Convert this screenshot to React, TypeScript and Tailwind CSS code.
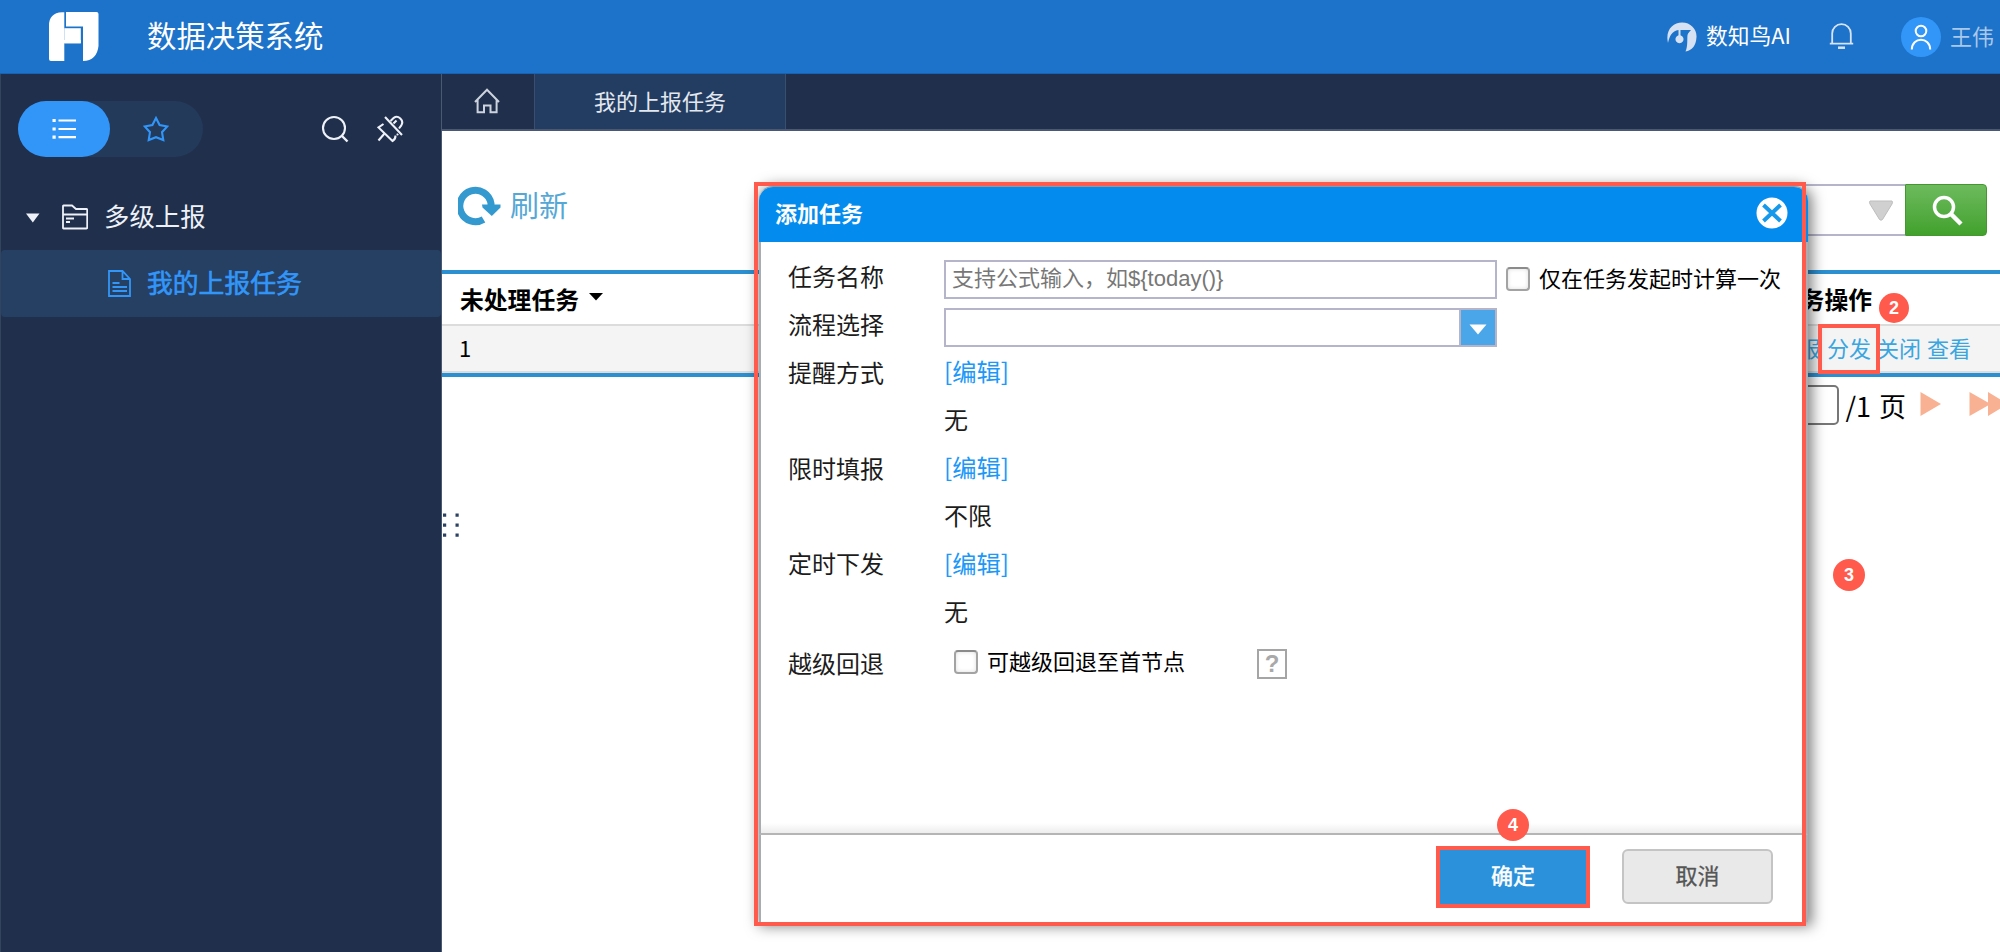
import type { ReactNode } from "react";

const icon = { fill: "none", stroke: "currentColor" } as const;

function Badge({ n, className }: { n: string; className: string }) {
  return (
    <span className={`absolute flex items-center justify-center rounded-full bg-[#ff5a4c] font-['Liberation_Sans'] text-[18px] font-bold leading-none text-white ${className}`}>
      {n}
    </span>
  );
}

function Header() {
  return (
    <header className="flex h-[74px] shrink-0 items-center border-b border-[#1862b4] bg-[#1d72c9] text-white">
      <svg className="ml-12 h-[51px] w-[51px]" viewBox="0 0 51 51" fill="white">
        <path d="M16.3 1.3 V29 H32.8 V32.3 H16.3 V50 H3 Q1 50 1 48 V14.5 Q1 2 14 1.3Z" />
        <path d="M16.3 17.2 H32.8 V32.3 H16.3Z" />
        <path d="M18 1 H48.5 Q50.5 1 50.5 3 V35 Q49 49.5 35 50 V15.6 H18Z" />
      </svg>
      <h1 className="ml-[48px] pb-[3px] text-[29.4px] leading-none">数据决策系统</h1>
      <div className="ml-auto flex items-center">
        <svg className="h-[30px] w-[30px] text-[#d6e2f4]" viewBox="0 0 30 30" fill="currentColor">
          <path d="M1 21 C-2 8 6 0.5 15 0.5 C24 0.5 30 7.5 29.5 15 C29 24 25 28.5 18.5 29.5 C21 24 20 17 20.5 13 C21 10.5 23 9.5 24 8 H13.5 V13.3 A4 4 0 1 1 11.5 13.3 V8 C5 9 2.500 14 1 21Z" />
        </svg>
        <span className="ml-[9px] pb-[3px] text-[21.8px] leading-none">数知鸟AI</span>
        <svg {...icon} className="ml-[38px] h-[27px] w-[25px] text-[#d6e4f6]" viewBox="0 0 25 27" strokeWidth="1.8">
          <path d="M3.2 20 V10.500 A9.300 9.300 0 0 1 21.800 10.500 V20 M0.800 20.600 H24.200" />
          <path d="M9 24.700 H16" strokeWidth="2.500" />
        </svg>
        <span className="ml-[47px] flex h-10 w-10 items-center justify-center rounded-full bg-[#3296f9]">
          <svg {...icon} className="h-[26px] w-[22px]" viewBox="0 0 22 26" strokeWidth="2">
            <circle cx="11" cy="7" r="5.300" />
            <path d="M1.800 25.500 C1.800 12.500 20.200 12.500 20.200 25.500" />
          </svg>
        </span>
        <span className="ml-[9px] mr-[6px] pb-1 text-[22px] leading-none text-[#a9c8ea]">王伟</span>
      </div>
    </header>
  );
}

function Sidebar() {
  return (
    <aside className="flex w-[442px] shrink-0 flex-col border-l border-r border-l-[#33445f] border-r-[#4a5873] bg-[#202f4b]">
      <div className="mt-[27px] flex h-14 items-center pl-[17px]">
        <div className="flex h-14 w-[185px] rounded-full bg-[#233a5b]">
          <span className="flex w-[92px] items-center justify-center rounded-full bg-[#3296f9] text-white">
            <svg {...icon} className="h-[22px] w-6" viewBox="0 0 24 22" strokeWidth="2.200">
              <path d="M6.500 2.500 H24 M6.500 11 H24 M6.500 19.200 H24" />
              <path d="M0.500 2.500 H3.700 M0.500 11 H3.700 M0.500 19.200 H3.700" strokeWidth="3.200" />
            </svg>
          </span>
          <span className="flex w-[92px] items-center justify-center text-[#3296f9]">
            <svg {...icon} className="h-[26px] w-[26px]" viewBox="0 0 26 26" strokeWidth="2.100">
              <path d="M13 2 L16.600 9 L24.300 10.400 L19 16.200 L20.300 24 L13 21.200 L5.700 24 L7 16.200 L1.700 10.400 L9.400 9Z" />
            </svg>
          </span>
        </div>
        <svg {...icon} className="ml-[118px] h-[28px] w-[28px] text-[#eef2f8]" viewBox="0 0 28 28" strokeWidth="2.100">
          <circle cx="13" cy="13" r="11" />
          <path d="M20.500 20.500 L26.500 26.500" strokeWidth="2.400" />
        </svg>
        <svg {...icon} className="ml-[27px] h-[28px] w-[28px] text-[#eef2f8]" viewBox="0 0 28 28" strokeWidth="2.100">
          <path d="M9 2 L26 20" />
          <path d="M7.500 9 L2.500 12.500 L16.500 26 Q19.500 24.500 19.500 20.500 M22 18.800 L21 20" />
          <path d="M8.500 18.500 L2.500 25.500" />
          <path d="M14.500 6 L17.800 2.800 C22 -0.300 28.500 5.200 25.300 10.300 L23 13.500 M17.500 8.500 L20.500 5.500" />
        </svg>
      </div>
      <div className="mt-[26px] flex h-[67px] items-center pl-[25px] text-[#eef2f8]">
        <svg className="mt-[2px] h-[10px] w-[14px]" viewBox="0 0 14 10" fill="currentColor"><path d="M0 0.500 H13.500 L6.800 9.500Z" /></svg>
        <svg {...icon} className="ml-[22px] mt-px h-[26px] w-[26px]" viewBox="0 0 26 26" strokeWidth="1.800">
          <path d="M1 24 V2 Q1 1.500 1.500 1.500 H10 L14 5 H24.500 Q25.200 5 25.200 6 V24 Q25.200 24.500 24.500 24.500 H1.500 Q1 24.500 1 24Z M1 10.500 H25 M4 14.500 H12 M4 18 H8" />
        </svg>
        <span className="ml-4 pb-px text-[25.4px] leading-none">多级上报</span>
      </div>
      <div className="flex h-[67px] items-center rounded bg-[#254063] pl-[107px] text-[#3296f9]">
        <svg {...icon} className="h-[27px] w-[23px]" viewBox="0 0 23 27" strokeWidth="1.800">
          <path d="M1 1 H14.500 L22 9 V26 H1Z M14.500 1 V9 H22 M4.500 13 H11.500 M4.500 17 H19 M4.500 21 H19" />
        </svg>
        <span className="ml-[16px] pb-[3px] text-[25.800px] leading-none [-webkit-text-stroke:0.6px_#3296f9]">我的上报任务</span>
      </div>
    </aside>
  );
}

function Tabs() {
  return (
    <nav className="flex h-[57px] shrink-0 border-b-2 border-[#4a5873] bg-[#202f4b] text-[#e3e8ef]">
      <span className="flex w-[93px] items-center justify-center border-r border-[#3a4f70] pb-[2px] pr-[2px]">
        <svg {...icon} className="h-[26px] w-[26px] text-[#ccd3de]" viewBox="0 0 26 26" strokeWidth="2">
          <path d="M1 14 L13 1.800 L25 14 M3.600 12 V24.300 H10 V17.500 H16.500 V24.300 H22.600 V12" />
        </svg>
      </span>
      <span className="flex w-[251px] items-center justify-center border-r border-[#3a4f70] bg-[#233d62] pb-[4px] text-[22px] leading-none">我的上报任务</span>
    </nav>
  );
}

function Report() {
  return (
    <section className="relative flex grow flex-col text-black">
      <div className="flex h-[139px] items-start pl-4">
        <svg {...icon} className="mt-[53px] h-[42px] w-[43px] text-[#3399cf]" viewBox="0 0 43 42" strokeWidth="7">
          <path d="M25.500 35.500 A15.700 15.700 0 1 1 33 19.500 V23" />
          <path d="M24 20.500 H42.500 V23.500 L33.800 32 L24.500 23.500Z" fill="currentColor" stroke="none" />
        </svg>
        <span className="ml-[9px] mt-[59px] text-[29px] leading-none text-[#55a8d6]">刷新</span>
        <div className="ml-auto mr-[13px] mt-[53px] flex h-[52px]">
          <div className="flex w-[300px] items-center justify-end border-2 border-r-0 border-[#b4b5cb] pr-[11px]">
            <svg className="h-[21px] w-[26px]" viewBox="0 0 26 21"><path d="M2 1 H24 Q25 2 24 4 L14.500 19.500 Q13 21 11.500 19.500 L2 4 Q1 2 2 1Z" fill="#d0d0d0" stroke="#bdbdbd" /></svg>
          </div>
          <span className="flex w-[82px] items-center justify-center rounded-r border border-[#45972f] bg-linear-to-b from-[#6dba5d] to-[#41a12b] pl-[3px] text-white">
            <svg {...icon} className="h-[31px] w-[31px]" viewBox="0 0 31 31" strokeWidth="3.500">
              <circle cx="12" cy="12" r="9.500" /><path d="M18.500 18.500 L29 29" strokeWidth="4.500" />
            </svg>
          </span>
        </div>
      </div>
      <div className="flex h-[106.500px] shrink-0 flex-col border-y-4 border-[#2c8fd0]">
        <div className="flex h-[52px] items-center justify-between border-b-2 border-[#dcdcdc] pl-[18px] pr-32 text-[23.800px] font-bold leading-none">
          <span className="flex items-center">
            未处理任务
            <svg className="mb-[3px] ml-[10px] h-2 w-[14px]" viewBox="0 0 14 8"><path d="M0 0 H14 L7 7.500Z" /></svg>
          </span>
          <span>任务操作</span>
        </div>
        <div className="flex grow items-center justify-between border-b-2 border-[#dcdcdc] bg-[#f4f4f4] pb-[2px] pl-[17px] pr-[29px] text-[22px] leading-none">
          <span>1</span>
          <span className="flex gap-[6px] text-[#3aa6e0]">
            <a>上报</a><a>分发</a><a>关闭</a><a>查看</a>
          </span>
        </div>
      </div>
      <div className="flex h-[60px] items-center justify-end overflow-hidden pb-[3px] text-[#f9b193]">
        <span className="h-10 w-[90px] rounded-[5px] border-2 border-[#777]" />
        <span className="ml-[6px] text-[27px] leading-none text-black [word-spacing:2px]">/1 页</span>
        <svg className="mb-[3px] ml-[14px] h-[26px] w-[22px]" viewBox="0 0 22 26" fill="currentColor"><path d="M0.500 1 L21 13 L0.500 25Z" /></svg>
        <svg className="mb-[3px] ml-[27px] h-[26px] w-[31px] shrink-0" viewBox="0 0 31 26" fill="currentColor"><path d="M0.500 1 L19 11.500 V1 L39 13 L19 25 V14.500 L0.500 25Z" /></svg>
      </div>
      <svg className="absolute left-[1px] top-[381px] h-[26px] w-4" viewBox="0 0 16 26" fill="#2c4262">
        <path d="M0 1.500h3.200v3.200h-3.200z M12.500 1.500h3.200v3.200h-3.200z M0 11.500h3.200v3.200h-3.200z M12.500 11.500h3.200v3.200h-3.200z M0 21.500h3.200v3.200h-3.200z M12.500 21.500h3.200v3.200h-3.200z" />
      </svg>
    </section>
  );
}

function Row({ label, children, className = "h-[47.85px]" }: { label?: string; children: ReactNode; className?: string }) {
  return (
    <div className={`flex items-center ${className}`}>
      <span className="w-[156px] pb-[3px] text-[24px] leading-none">{label}</span>
      {children}
    </div>
  );
}

function Value({ children }: { children: ReactNode }) {
  return <span className="pb-1 text-[24px] leading-none">{children}</span>;
}

function EditLink() {
  return <a className="pb-1 text-[24.300px] leading-none text-[#1b98f8]">[编辑]</a>;
}

function Check({ label }: { label: string }) {
  return (
    <label className="flex items-center text-[22px] leading-none text-black">
      <span className="mr-[9px] h-6 w-6 rounded border-2 border-[#a3a3a3] border-t-[#8b8b8b] bg-white shadow-[inset_0_0_4px_#ddd]" />
      <span className="pb-1">{label}</span>
    </label>
  );
}

function Dialog() {
  return (
    <div className="absolute left-[759px] top-[186px] flex h-[736px] w-[1049px] flex-col rounded-t-[14px] border-t border-[#8c9aa5] bg-white shadow-[2px_2px_14px_2px_rgba(0,0,0,0.5)]">
      <div className="flex h-[55px] shrink-0 items-center justify-between rounded-t-[14px] bg-[#038bee] pl-[16px] pr-[20px] text-white">
        <span className="pb-[5px] text-[22px] font-bold leading-none">添加任务</span>
        <svg className="mb-[4px] h-8 w-8" viewBox="0 0 32 32">
          <circle cx="16" cy="16" r="15.500" fill="white" />
          <path d="M7.500 8 L24.500 24 M24.500 8 L7.500 24" stroke="#1699ea" strokeWidth="4" />
        </svg>
      </div>
      <div className="flex grow flex-col border-x-2 border-[#a9adb1] pl-[27px] pt-3 text-[#1c1c1c]">
        <Row label="任务名称">
          <span className="mt-[3px] flex h-[39px] w-[553px] items-center border-2 border-[#b4b5cb] pl-[6px] font-['Liberation_Sans','Noto_Sans_CJK_SC',sans-serif] text-[22px] leading-none text-[#777]">支持公式输入，如${"{today()}"}</span>
          <span className="ml-[9px] mt-[3px]"><Check label="仅在任务发起时计算一次" /></span>
        </Row>
        <Row label="流程选择">
          <span className="mt-[3px] flex h-[39px] w-[553px] border-2 border-[#b4b5cb]">
            <span className="ml-auto flex w-[36px] items-center justify-center border-l-2 border-[#b4b5cb] bg-[#4aa6e9]">
              <svg className="mt-1 h-[11px] w-[18px]" viewBox="0 0 18 11" fill="white"><path d="M0.500 0.500 H17.500 L9 10.500Z" /></svg>
            </span>
          </span>
        </Row>
        <Row label="提醒方式"><EditLink /></Row>
        <Row><Value>无</Value></Row>
        <Row label="限时填报"><EditLink /></Row>
        <Row><Value>不限</Value></Row>
        <Row label="定时下发"><EditLink /></Row>
        <Row><Value>无</Value></Row>
        <Row label="越级回退" className="h-[55px]">
          <span className="mb-[5px] ml-[10px]"><Check label="可越级回退至首节点" /></span>
          <span className="ml-[72px] flex h-[30px] w-[30px] items-center justify-center border-2 border-[#a5a5a5] font-['Liberation_Sans'] text-[24px] font-bold leading-none text-[#a9a9a9]">?</span>
        </Row>
      </div>
      <div className="h-3 border-x-2 border-b-2 border-x-[#a9adb1] border-b-[#b5b5b5] bg-linear-to-b from-white to-[#ededed]" />
      <div className="flex h-[87px] shrink-0 items-center justify-end border-x-2 border-[#a9adb1] pb-[4px] pr-[33px] text-[22px] leading-none">
        <button className="flex h-[62px] w-[154px] items-center justify-center border-4 border-[#ff5a4c] bg-[#2b91da] pb-[5px] text-white [-webkit-text-stroke:0.5px_white]">确定</button>
        <button className="ml-8 flex h-[55px] w-[151px] items-center justify-center rounded-[6px] border-2 border-[#c4c4c4] bg-[#e9e9e9] pb-[5px] text-[#555] [-webkit-text-stroke:0.3px_#555]">取消</button>
      </div>
    </div>
  );
}

export default function App() {
  return (
    <div className="relative flex h-[952px] w-[2000px] flex-col overflow-hidden bg-white font-['Noto_Sans_CJK_SC',sans-serif]">
      <Header />
      <div className="flex grow">
        <Sidebar />
        <main className="flex min-w-0 grow flex-col">
          <Tabs />
          <Report />
        </main>
      </div>
      <Dialog />
      <span className="absolute left-[754px] top-[182px] h-[744px] w-[1052px] border-4 border-[#ff5a4c]" />
      <span className="absolute left-[1818px] top-[324px] h-[50px] w-[62px] border-4 border-[#ff5a4c]" />
      <Badge n="2" className="left-[1879px] top-[293px] h-[30px] w-[30px]" />
      <Badge n="3" className="left-[1833px] top-[559px] h-8 w-8" />
      <Badge n="4" className="left-[1497px] top-[809px] h-8 w-8" />
    </div>
  );
}
